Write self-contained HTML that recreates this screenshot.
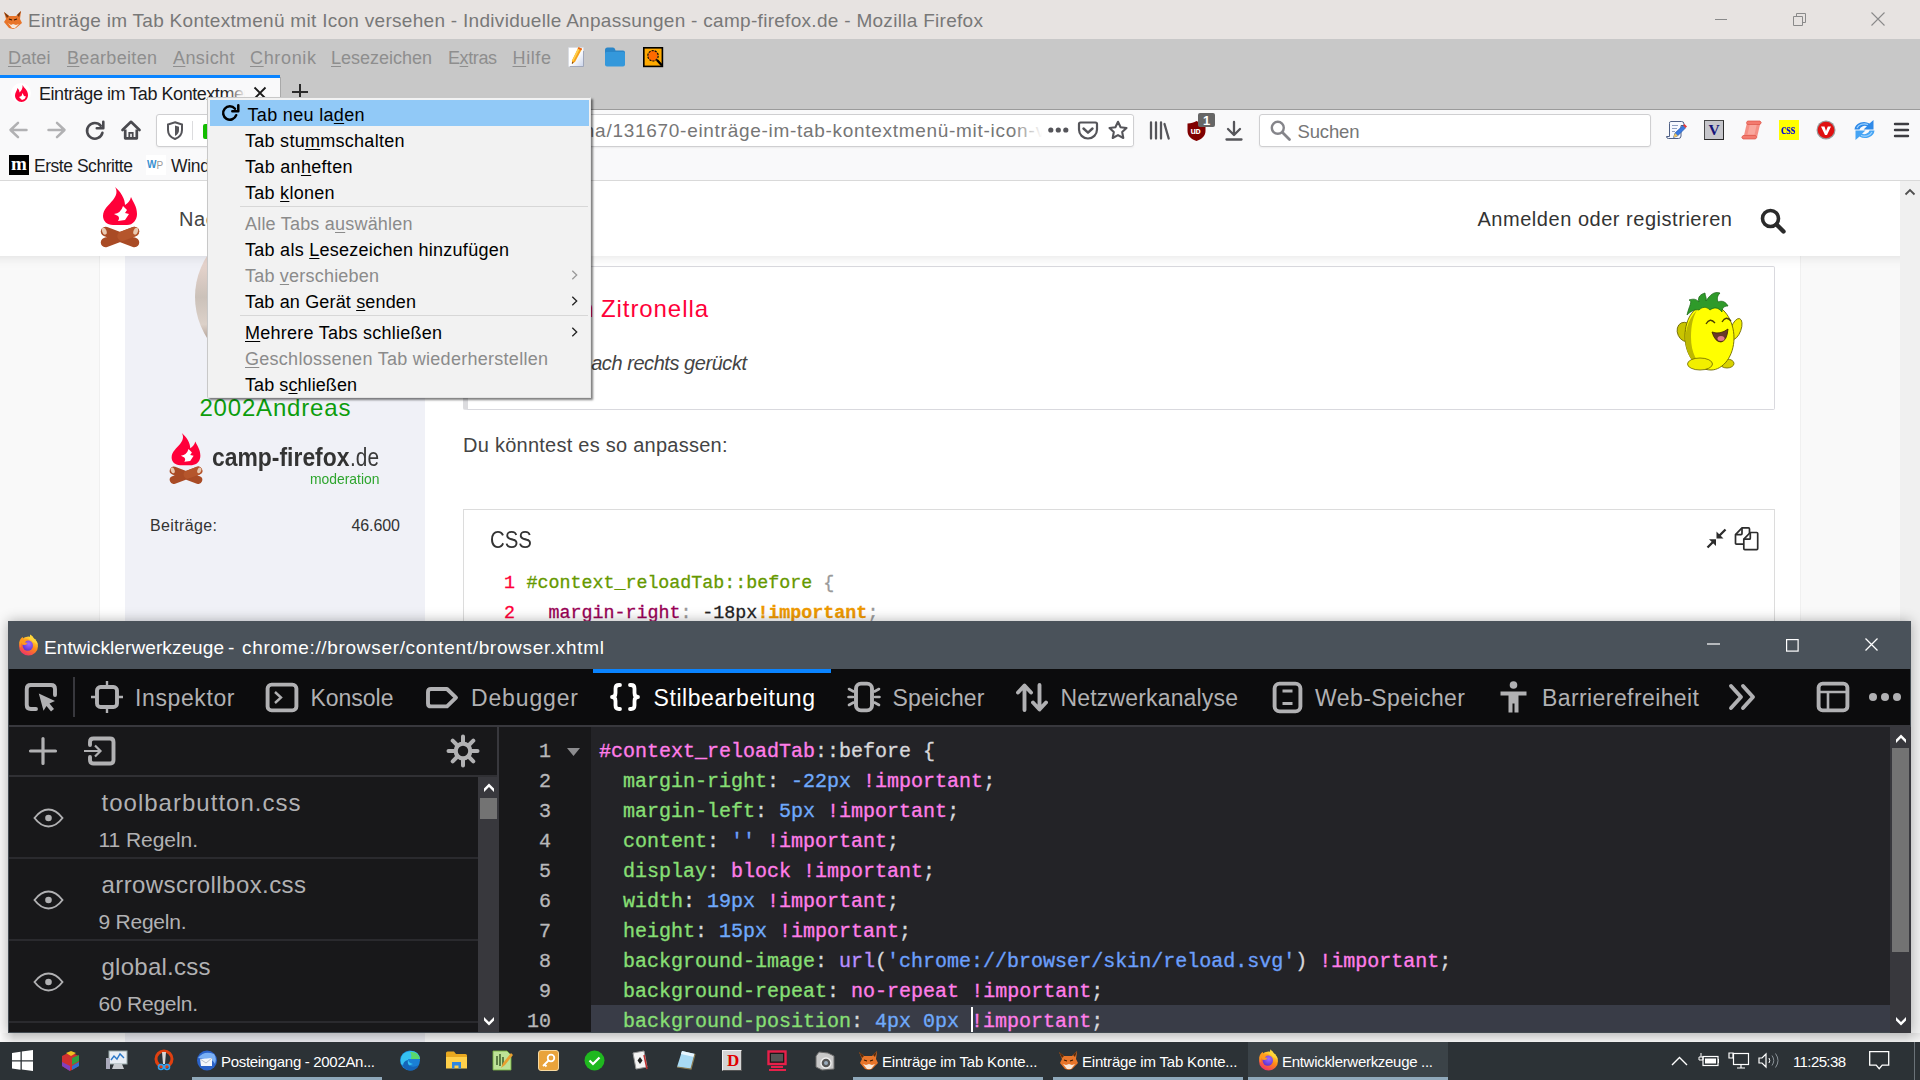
<!DOCTYPE html>
<html lang="de"><head><meta charset="utf-8"><title>Einträge im Tab Kontextmenü mit Icon versehen</title>
<style>
html,body{margin:0;padding:0}
body{width:1920px;height:1080px;overflow:hidden;position:relative;background:#f9f9f9;font-family:"Liberation Sans",sans-serif}
div,svg{position:absolute;box-sizing:border-box}
.t{white-space:nowrap;line-height:0}
.t .s{display:inline-block;height:60px;width:0}
u{text-decoration:underline;text-decoration-thickness:1px;text-underline-offset:2px}
svg{overflow:visible}
</style></head><body>
<div style="left:0px;top:0px;width:1920px;height:39px;background:#e7e3e1;"></div>
<svg style="left:2px;top:9px;" width="21" height="21" viewBox="0 0 21 21"><path d="M2 3l5 4h7l5-5-1 8 2 4-6 5-3 1-4-1-5-6 2-3z" fill="#e8752a"/><path d="M6 14l4 5 3 0 4-4-3 1-3-1-2 1z" fill="#f6e9dc"/><path d="M2 3l3 6 2-2z M19 2l-2 6-2-2z" fill="#7a3a10"/><path d="M7 10l3 1M15 10l-3 1" stroke="#3a1a00" stroke-width="1.2"/></svg>
<div class="t" style="left:28px;top:-33px;font:400 19px 'Liberation Sans',sans-serif;color:#787878;letter-spacing:0.292px;"><i class="s"></i><span>Einträge im Tab Kontextmenü mit Icon versehen - Individuelle Anpassungen - camp-firefox.de - Mozilla Firefox</span></div>
<svg style="left:1714px;top:12px;" width="14" height="14" viewBox="0 0 14 14"><path d="M1 7.5h12" stroke="#8a8a8a" stroke-width="1"/></svg>
<svg style="left:1793px;top:13px;" width="13" height="13" viewBox="0 0 13 13"><path d="M.5 3.5h9v9h-9z M3.5 3.5v-3h9v9h-3" fill="none" stroke="#8a8a8a" stroke-width="1"/></svg>
<svg style="left:1871px;top:12px;" width="14" height="14" viewBox="0 0 14 14"><path d="M.5 .5l13 13M13.5 .5l-13 13" stroke="#8a8a8a" stroke-width="1.1"/></svg>
<div style="left:0px;top:39px;width:1920px;height:71px;background:#c8c8c8;"></div>
<div class="t" style="left:8px;top:4px;font:400 18px 'Liberation Sans',sans-serif;color:#8e8e8e;letter-spacing:0.117px;"><i class="s"></i><span><u>D</u>atei</span></div>
<div class="t" style="left:67px;top:4px;font:400 18px 'Liberation Sans',sans-serif;color:#8e8e8e;letter-spacing:0.325px;"><i class="s"></i><span><u>B</u>earbeiten</span></div>
<div class="t" style="left:173px;top:4px;font:400 18px 'Liberation Sans',sans-serif;color:#8e8e8e;letter-spacing:0.409px;"><i class="s"></i><span><u>A</u>nsicht</span></div>
<div class="t" style="left:250px;top:4px;font:400 18px 'Liberation Sans',sans-serif;color:#8e8e8e;letter-spacing:0.661px;"><i class="s"></i><span><u>C</u>hronik</span></div>
<div class="t" style="left:331px;top:4px;font:400 18px 'Liberation Sans',sans-serif;color:#8e8e8e;letter-spacing:-0.009px;"><i class="s"></i><span><u>L</u>esezeichen</span></div>
<div class="t" style="left:448px;top:4px;font:400 18px 'Liberation Sans',sans-serif;color:#8e8e8e;letter-spacing:-0.406px;"><i class="s"></i><span>E<u>x</u>tras</span></div>
<div class="t" style="left:512.5px;top:4px;font:400 18px 'Liberation Sans',sans-serif;color:#8e8e8e;letter-spacing:0.621px;"><i class="s"></i><span><u>H</u>ilfe</span></div>
<svg style="left:568px;top:47px;" width="17" height="20" viewBox="0 0 17 20"><defs><linearGradient id="npg" x1="0" y1="0" x2="1" y2="1"><stop offset=".5" stop-color="#fff"/><stop offset="1" stop-color="#c9d3ea"/></linearGradient></defs><path d="M.500 .500h15v19H.500z" fill="url(#npg)" stroke="#d4d8e2" stroke-width=".600"/><path d="M15.500 4v15.500H2" fill="none" stroke="#9aa2b6" stroke-width=".900"/><path d="M10.500 .300l3.600 1.500-7 13-3.200 2.200.200-3.800z" fill="#f7a21b"/><path d="M10.500 .300l1.800.700-7 13.200-1.200-.500z" fill="#ffd24d"/><path d="M3.900 17l.100-2.200 1.700.900z" fill="#7a4a1a"/><path d="M10.500 .300l3.600 1.500-.800 1.500-3.600-1.500z" fill="#e8601c"/></svg>
<svg style="left:605px;top:47px;" width="20" height="20" viewBox="0 0 20 20"><path d="M0 3q0-2.500 2.500-2.500h5.500q1.500 0 2 1.500l.500 1.500H18q2 0 2 2V9H0z" fill="#2a86c8"/><path d="M0 6.500q0-1.500 1.500-1.500H18.500Q20 5 20 6.500V17.500q0 2-2 2H2q-2 0-2-2z" fill="#3498db"/></svg>
<svg style="left:643px;top:47px;" width="20" height="20" viewBox="0 0 20 20"><rect x=".800" y=".800" width="18.600" height="18.600" fill="#ffaa00" stroke="#000" stroke-width="1.600"/><circle cx="10" cy="8.800" r="5.200" fill="#ff6a00" stroke="#111" stroke-width="1.200" stroke-dasharray="2.200 1"/><path d="M14 13l5 5.500" stroke="#000" stroke-width="2.400"/></svg>
<div style="left:0px;top:109px;width:1920px;height:1px;background:#9b9b9b;"></div>
<div style="left:0px;top:75px;width:280px;height:35px;background:#f9f9fa;"></div>
<div style="left:0px;top:75px;width:280px;height:3px;background:#0a84ff;"></div>
<div style="left:280px;top:77px;width:1px;height:32px;background:#a9a9a9;"></div>
<div style="left:11px;top:83px;width:20px;height:20px;background:#fff;border-radius:50%"></div>
<svg style="left:13.5px;top:85px;" width="15" height="17" viewBox="0 0 15 17"><path d="M8.5 0c1.5 3 5.5 5 5.5 10 0 4-3 7-6.5 7S1 14 1 10.5c0-3 2-4.500 2.500-7.500 1.500 1.500 2 3 2 4.500C7.500 6 9 3 8.500 0z" fill="#ff0039"/><path d="M5 12l2.500-1 1-3 1.500 3 2 .5-1.500 2.500-2.500 1z" fill="#fff"/></svg>
<div class="t" style="left:39px;width:208px;overflow:hidden;top:40px;font:400 18px 'Liberation Sans',sans-serif;color:#1c1c1e;letter-spacing:-.45px"><i class="s"></i><span>Einträge im Tab Kontextmenü mit Icon</span></div>
<div style="left:226px;top:78px;width:54px;height:30px;background:linear-gradient(90deg,rgba(249,249,250,0),#f9f9fa 36%);"></div>
<svg style="left:253px;top:86px;" width="14" height="14" viewBox="0 0 14 14"><path d="M1.500 1.500l11 11M12.500 1.500l-11 11" stroke="#1a1a1a" stroke-width="1.800"/></svg>
<svg style="left:291px;top:83px;" width="18" height="18" viewBox="0 0 18 18"><path d="M9 1v16M1 9h16" stroke="#2a2a2a" stroke-width="2"/></svg>
<div style="left:0px;top:110px;width:1920px;height:70px;background:#f9f9fa;"></div>
<div style="left:0px;top:180px;width:1920px;height:1px;background:#d9d9d9;"></div>
<svg style="left:8px;top:121px;" width="20" height="18" viewBox="0 0 20 18"><path d="M18.500 9H3M10 1.800L2.500 9l7.500 7.200" fill="none" stroke="#b1b1b3" stroke-width="2.500" stroke-linecap="round" stroke-linejoin="round"/></svg>
<svg style="left:47px;top:121px;transform:scaleX(-1)" width="20" height="18" viewBox="0 0 20 18"><path d="M18.500 9H3M10 1.800L2.500 9l7.500 7.200" fill="none" stroke="#b1b1b3" stroke-width="2.500" stroke-linecap="round" stroke-linejoin="round"/></svg>
<svg style="left:85px;top:120px;" width="20" height="20" viewBox="0 0 20 20"><path d="M15.800 5.800A7.800 7.800 0 1 0 17.400 12.800" fill="none" stroke="#4a4a4f" stroke-width="2.600" stroke-linecap="round"/><path d="M18.300 1.800v6.500h-6.500" fill="none" stroke="#4a4a4f" stroke-width="2.600" stroke-linecap="round" stroke-linejoin="round"/></svg>
<svg style="left:121px;top:120px;" width="20" height="20" viewBox="0 0 20 20"><path d="M1.500 10L10 1.800l8.500 8.200" fill="none" stroke="#4a4a4f" stroke-width="2.700" stroke-linecap="round" stroke-linejoin="round"/><path d="M4.200 9.500v8.800h11.600V9.500" fill="none" stroke="#4a4a4f" stroke-width="2.700" stroke-linejoin="round"/><path d="M8.300 18v-5.200h3.400V18" fill="none" stroke="#4a4a4f" stroke-width="1.800"/></svg>
<div style="left:156px;top:114px;width:978px;height:33px;background:#fff;border:1px solid #cfcfd1;border-radius:3px;box-shadow:0 1px 2px rgba(0,0,0,.06)"></div>
<svg style="left:166px;top:121px;" width="18" height="19" viewBox="0 0 18 19"><path d="M9 1.200l7 2.300v5.500c0 4.500-3 7.500-7 9-4-1.500-7-4.500-7-9V3.500z" fill="none" stroke="#55555a" stroke-width="2"/><path d="M9 4.500v10.500c2.500-1.200 4-3.200 4-6V5.800z" fill="#55555a"/></svg>
<div style="left:192px;top:121px;width:1px;height:19px;background:#dcdcde;"></div>
<div style="left:203px;top:124px;width:8px;height:15px;background:#12bc00;border-radius:2px"></div>
<div class="t" style="right:1307.5px;top:77px;font:400 19px 'Liberation Sans',sans-serif;color:#767676;letter-spacing:.8px"><i class="s"></i><span>camp-firefox.de/forum/thema/</span></div>
<div class="t" style="left:612.5px;top:77px;font:400 19px 'Liberation Sans',sans-serif;color:#767676;letter-spacing:0.703px;"><i class="s"></i><span>131670-einträge-im-tab-kontextmenü-mit-icon</span></div>
<div class="t" style="left:1028.5px;top:77px;font:400 19px 'Liberation Sans',sans-serif;color:#767676;letter-spacing:.8px"><i class="s"></i><span>-versehen/</span></div>
<div style="left:1012px;top:116px;width:33px;height:29px;background:linear-gradient(90deg,rgba(255,255,255,0),#fff 92%);"></div>
<div style="left:1045px;top:116px;width:88px;height:29px;background:#fff;"></div>
<svg style="left:1048px;top:127px;" width="21" height="6" viewBox="0 0 21 6"><circle cx="2.800" cy="3" r="2.600" fill="#55555a"/><circle cx="10.300" cy="3" r="2.600" fill="#55555a"/><circle cx="17.800" cy="3" r="2.600" fill="#55555a"/></svg>
<svg style="left:1078px;top:121px;" width="20" height="19" viewBox="0 0 20 19"><path d="M2.500 1.500h15q1.500 0 1.500 1.500v5.500a9 9 0 0 1-18 0V3q0-1.500 1.500-1.500z" fill="none" stroke="#55555a" stroke-width="2.200"/><path d="M5.500 7.500l4.500 4.200 4.500-4.200" fill="none" stroke="#55555a" stroke-width="2.400" stroke-linecap="round" stroke-linejoin="round"/></svg>
<svg style="left:1108px;top:120px;" width="20" height="20" viewBox="0 0 20 20"><path d="M10 1.800l2.600 5.400 5.900.8-4.300 4.100 1.100 5.900L10 15.100 4.700 18l1.100-5.900L1.500 8l5.900-.8z" fill="none" stroke="#55555a" stroke-width="2.100" stroke-linejoin="round"/></svg>
<svg style="left:1149px;top:121px;" width="21" height="19" viewBox="0 0 21 19"><path d="M2 1.500v16M7 1.500v16M12 1.500v16M15.500 3l4.200 14.500" fill="none" stroke="#55555a" stroke-width="2.300" stroke-linecap="round"/></svg>
<svg style="left:1187px;top:121px;" width="19" height="20" viewBox="0 0 19 20"><path d="M9.500 0c2.500 1.600 5.500 2.400 9 2.600v7.400c0 5-4 8.300-9 10-5-1.700-9-5-9-10V2.600C4 2.400 7 1.600 9.500 0z" fill="#800000"/></svg>
<div class="t" style="left:1190.5px;top:74px;font:700 9px 'Liberation Sans',sans-serif;color:#fff;letter-spacing:-.5px"><i class="s"></i><span>uᴅ</span></div>
<div style="left:1198px;top:113px;width:17px;height:14px;background:#666;border-radius:2px"></div>
<div class="t" style="left:1203px;top:65px;font:700 13px 'Liberation Sans',sans-serif;color:#fff;"><i class="s"></i><span>1</span></div>
<svg style="left:1225px;top:121px;" width="18" height="20" viewBox="0 0 18 20"><path d="M9 1v12M3 8l6 6 6-6M1.500 18.500h15" fill="none" stroke="#55555a" stroke-width="2.300" stroke-linecap="round" stroke-linejoin="round"/></svg>
<div style="left:1259px;top:114px;width:392px;height:33px;background:#fff;border:1px solid #cfcfd1;border-radius:3px;box-shadow:0 1px 2px rgba(0,0,0,.06)"></div>
<svg style="left:1270px;top:120px;" width="21" height="21" viewBox="0 0 21 21"><circle cx="7.800" cy="7.800" r="6" fill="none" stroke="#85858a" stroke-width="2.400"/><path d="M12.500 12.500l7 7" stroke="#85858a" stroke-width="2.800" stroke-linecap="round"/></svg>
<div class="t" style="left:1297.5px;top:78px;font:400 18.5px 'Liberation Sans',sans-serif;color:#767676;letter-spacing:-0.150px;"><i class="s"></i><span>Suchen</span></div>
<svg style="left:1666px;top:120px;" width="21" height="20" viewBox="0 0 21 20"><path d="M4.500 1.500h11q2.500 0 2.500 2.500v1.500h-3V16q0 2.500-2.500 2.500h-10Q.500 18.500.500 16.500h3V3.500q0-2 1-2z" fill="#f6f9ff" stroke="#4e5f85" stroke-width="1"/><path d="M6 5.500h6M6 8.500h5M6 11.500h3" stroke="#8fa0c4" stroke-width="1"/><path d="M7.500 17.500l1.500-4.500 8-7.500 2.500 2.500-8 8z" fill="#3a7ae0" stroke="#2050a0" stroke-width=".600"/><path d="M17 5.500l1.500-1.500 2.500 2.500-1.500 1.500z" fill="#e23a3a"/><path d="M7.500 17.500l1.500-4.500 3 3z" fill="#f2c45a"/></svg>
<div style="left:1704px;top:120px;width:20px;height:20px;background:#c6c6cb;border:1px solid #4a4a4a;border-right-color:#2a2a2a;border-bottom-color:#2a2a2a"></div>
<div class="t" style="left:1708.5px;top:75.19999999999999px;font:700 15.5px 'Liberation Serif',serif;color:#15157a;"><i class="s"></i><span>V</span></div>
<svg style="left:1741px;top:120px;" width="21" height="20" viewBox="0 0 21 20"><path d="M6 2.500h13.500L16 17.500H2.500z" fill="#f58f84"/><path d="M9 3.500h7l-2.500 11h-7z" fill="#f9a79d"/><path d="M6.500 1h12.500q2.500 1.700 0 3.500H6.500q-2-1.700 0-3.500z" fill="#f37a6e" stroke="#dd5548" stroke-width=".700"/><path d="M2 15.500h12.500q2.500 1.700 0 3.500H2q-2.500-1.700 0-3.500z" fill="#f37a6e" stroke="#dd5548" stroke-width=".700"/></svg>
<div style="left:1779px;top:120px;width:20px;height:20px;background:#ffff00;"></div>
<div class="t" style="left:1781px;top:73.69999999999999px;font:700 14px 'Liberation Serif',serif;color:#0a0ad8;transform:scaleX(0.8467);transform-origin:0 0;"><i class="s"></i><span>css</span></div>
<svg style="left:1816px;top:120px;" width="20" height="20" viewBox="0 0 20 20"><circle cx="10" cy="10" r="9.500" fill="#9a9a9a"/><circle cx="10" cy="10" r="8.300" fill="#e01010"/><path d="M5 6.500h3.500L10 11l1.800-4.500H15L11 15H9z" fill="#fff"/></svg>
<svg style="left:1854px;top:120px;" width="21" height="20" viewBox="0 0 21 20"><path d="M.500 9.500A9.500 8 0 0 1 15.500 3.500L19.500 0v9.500H9.500l3.500-3.300A5.500 4.500 0 0 0 5.500 9.500z" fill="#2f8ae8"/><path d="M20.500 10.500A9.500 8 0 0 1 5.500 16.500L1.500 20v-9.500h10L8 13.800a5.500 4.500 0 0 0 7.500-3.300z" fill="#45a4f4"/><path d="M3 8A8 6.500 0 0 1 14 4.500M18 12a8 6.500 0 0 1-11 3.500" fill="none" stroke="#9fd4ff" stroke-width="1.200"/></svg>
<svg style="left:1894px;top:122px;" width="15" height="16" viewBox="0 0 15 16"><path d="M1 2h13M1 8h13M1 14h13" stroke="#3d3d42" stroke-width="2.400" stroke-linecap="round"/></svg>
<div style="left:9px;top:155px;width:20px;height:20px;background:#000;"></div>
<div class="t" style="left:11px;top:109.5px;font:700 19px 'Liberation Serif',serif;color:#fff;"><i class="s"></i><span>m</span></div>
<div class="t" style="left:34px;top:112px;font:400 17.5px 'Liberation Sans',sans-serif;color:#1c1c1e;letter-spacing:-0.465px;"><i class="s"></i><span>Erste Schritte</span></div>
<div style="left:146px;top:155px;width:20px;height:20px;background:#fff;"></div>
<div class="t" style="left:147px;top:108px;font:700 10px 'Liberation Sans',sans-serif;color:#3a8fd0;"><i class="s"></i><span>W</span></div>
<div class="t" style="left:156.5px;top:109px;font:400 10px 'Liberation Sans',sans-serif;color:#9a9a9a;"><i class="s"></i><span>P</span></div>
<div class="t" style="left:171px;top:112px;font:400 17.5px 'Liberation Sans',sans-serif;color:#1c1c1e;letter-spacing:-.3px"><i class="s"></i><span>Windows</span></div>
<div style="left:99px;top:181px;width:1702px;height:861px;background:#fff;border-left:1px solid #f0f0f0;border-right:1px solid #f0f0f0"></div>
<div style="left:125px;top:256px;width:300px;height:786px;background:#f0f1f7;"></div>
<div style="left:195px;top:221px;width:152px;height:152px;background:linear-gradient(180deg,#e6d3cc 28%,#cbc1b9 50%,#dcd1c9 68%,#8a7164 88%);border-radius:50%"></div>
<div class="t" style="left:199.4px;top:355.5px;font:400 24px 'Liberation Sans',sans-serif;color:#0d9d0d;letter-spacing:0.822px;"><i class="s"></i><span>2002Andreas</span></div>
<svg style="left:169px;top:433px;" width="34" height="52" viewBox="0 0 40 61.500"><path d="M15 0C18 5 16 9 13 13 9 18 3 22 3 29c0 5 4 9 10 9h14c6 0 10-5 10-11 0-8-4-12-6-17-1 4-3 6-6 8 0-6-4-13-10-18z" fill="#ff0039"/>
<path d="M23 19l4 4-2 3 4 1-4 6-7 1q2-3 0-5l-4-2q7-1 9-8z" fill="#fff"/>
<path d="M5.500 44.500l29 11M34.500 44.500l-29 11" stroke="#a94b25" stroke-width="9.500" stroke-linecap="round"/><path d="M34.500 44.500L22 49.200" stroke="#b5562c" stroke-width="9.500" stroke-linecap="round"/>
<ellipse cx="4.300" cy="44.200" rx="2.200" ry="3.600" transform="rotate(-20 4.300 44.200)" fill="#e9c9b0"/><ellipse cx="35.700" cy="44.200" rx="2.200" ry="3.600" transform="rotate(20 35.700 44.200)" fill="#e9c9b0"/></svg>
<div class="t" style="left:211.5px;top:405.5px;font:700 26px 'Liberation Sans',sans-serif;color:#333;transform:scaleX(0.8811);transform-origin:0 0;"><i class="s"></i><span>camp-firefox</span></div>
<div class="t" style="left:350px;top:405.5px;font:400 26px 'Liberation Sans',sans-serif;color:#3a3a3a;transform:scaleX(0.8021);transform-origin:0 0;"><i class="s"></i><span>.de</span></div>
<div class="t" style="left:309.5px;top:423.5px;font:400 14.5px 'Liberation Sans',sans-serif;color:#2ea52e;transform:scaleX(0.9580);transform-origin:0 0;"><i class="s"></i><span>moderation</span></div>
<div class="t" style="left:150px;top:471px;font:400 16px 'Liberation Sans',sans-serif;color:#333;letter-spacing:0.369px;"><i class="s"></i><span>Beiträge:</span></div>
<div class="t" style="left:351.5px;top:471px;font:400 16px 'Liberation Sans',sans-serif;color:#333;letter-spacing:-0.087px;"><i class="s"></i><span>46.600</span></div>
<div style="left:463px;top:266px;width:1312px;height:144px;background:#fff;border:1px solid #d9d9de;border-left:5px solid #dcdcdf;border-radius:2px"></div>
<div class="t" style="right:1325.5px;top:257px;font:400 24px 'Liberation Sans',sans-serif;color:#ff0039;letter-spacing:1px"><i class="s"></i><span>Zitat von</span></div>
<div class="t" style="left:601px;top:257px;font:400 24px 'Liberation Sans',sans-serif;color:#ff0039;letter-spacing:0.920px;"><i class="s"></i><span>Zitronella</span></div>
<div class="t" style="right:1345px;top:310px;font:italic 400 20px 'Liberation Sans',sans-serif;color:#444;"><i class="s"></i><span>Icon etwas</span></div>
<div class="t" style="left:580.5px;top:310px;font:italic 400 20px 'Liberation Sans',sans-serif;color:#444;letter-spacing:-0.446px;"><i class="s"></i><span>nach rechts gerückt</span></div>
<svg style="left:1677px;top:292px;" width="66" height="80" viewBox="0 0 66 80"><ellipse cx="8.500" cy="40" rx="8" ry="10" transform="rotate(-25 8.500 40)" fill="#c9c400" stroke="#6b6400" stroke-width=".800"/><ellipse cx="59" cy="37" rx="5" ry="11" transform="rotate(20 59 37)" fill="#f4f000" stroke="#6b6400" stroke-width=".800"/>
<ellipse cx="50" cy="71.500" rx="7" ry="4.500" fill="#d8d200" stroke="#6b6400" stroke-width=".800"/>
<path d="M32 12C46 12 57 28 57 46 57 64 46 78 34 78 20 78 8 64 8 44 8 26 18 12 32 12z" fill="#ffff00" stroke="#6b6400" stroke-width=".900"/>
<path d="M20 18C10 28 6 44 10 58c3 10 10 17 18 19-8-6-14-16-14-32 0-12 2-20 6-27z" fill="#bdb800"/>
<ellipse cx="23" cy="72" rx="12.500" ry="6" fill="#f2ee00" stroke="#6b6400" stroke-width=".800"/>
<path d="M10 23C12 14 16 9 12 8c6-2 8 0 10 2-2-5 2-8 6-9 0 3 2 5 1 8 4-6 8-10 14-8-3 3-3 6-2 9 4-2 8 0 10 4-4 0-6 2-6 6-4-5-8-5-12-2-4-4-8-3-11 0-4-1-8 1-12 5z" fill="#2f9a2a" stroke="#176312" stroke-width=".700"/>
<path d="M29 32q4-7 9-1M45 30q4-7 9-1" fill="none" stroke="#4a4000" stroke-width="1.300"/><path d="M35 40q8 3 16-3-1 12-7 13-6 0-9-10z" fill="#6a3a2a" stroke="#3a2000" stroke-width=".800"/><ellipse cx="44" cy="46.500" rx="3.500" ry="2.500" fill="#e07a8a"/></svg>
<div class="t" style="left:463px;top:392px;font:400 20px 'Liberation Sans',sans-serif;color:#444;letter-spacing:0.252px;"><i class="s"></i><span>Du könntest es so anpassen:</span></div>
<div style="left:463px;top:509px;width:1312px;height:540px;background:#fff;border:1px solid #dcdcdc"></div>
<div class="t" style="left:489.5px;top:488px;font:400 24px 'Liberation Sans',sans-serif;color:#333;transform:scaleX(0.8509);transform-origin:0 0;"><i class="s"></i><span>CSS</span></div>
<svg style="left:1706px;top:528px;" width="21" height="21" viewBox="0 0 21 21"><path d="M19.500 1.500L13 8M1.500 19.500L8 13" stroke="#2d2d2d" stroke-width="2.300"/><path d="M10.500 3.500v7h7z M3 11.300h7V18z" fill="#2d2d2d"/></svg>
<svg style="left:1735px;top:527px;" width="24" height="24" viewBox="0 0 24 24"><path d="M7 .900h6.500q1 0 1 1V17.200H1.500q-1 0-1-1V7.600z" fill="#fff" stroke="#2d2d2d" stroke-width="1.700" stroke-linejoin="round"/><path d="M7 .900V6.600q0 1-1 1H.500" fill="none" stroke="#2d2d2d" stroke-width="1.700"/><path d="M15.300 5.500h6.400q1 0 1 1V21.600q0 1-1 1H9.800q-1 0-1-1V12.200z" fill="#fff" stroke="#2d2d2d" stroke-width="1.700" stroke-linejoin="round"/><path d="M15.300 5.500V11.200q0 1-1 1H8.800" fill="none" stroke="#2d2d2d" stroke-width="1.700"/></svg>
<div class="t" style="left:504px;top:528px;font:400 18.333px 'Liberation Mono',monospace;color:#ff0039;-webkit-text-stroke:.3px"><i class="s"></i><span>1</span></div>
<div class="t" style="left:526.4px;top:528px;font:400 18.333px 'Liberation Mono',monospace;color:#222;-webkit-text-stroke:.3px"><i class="s"></i><span><span style="color:#690">#context_reloadTab::before</span> <span style="color:#999">{</span></span></div>
<div class="t" style="left:504px;top:558px;font:400 18.333px 'Liberation Mono',monospace;color:#ff0039;-webkit-text-stroke:.3px"><i class="s"></i><span>2</span></div>
<div class="t" style="left:548.4px;top:558px;font:400 18.333px 'Liberation Mono',monospace;color:#222;-webkit-text-stroke:.3px"><i class="s"></i><span><span style="color:#905">margin-right</span><span style="color:#999">:</span> -18px<b style="color:#e90">!important</b><span style="color:#999">;</span></span></div>
<div style="left:0px;top:181px;width:1900px;height:110px;overflow:hidden"><div style="left:-20px;top:0;width:1940px;height:75px;background:#fff;box-shadow:0 0 12px rgba(0,0,0,.13)"></div></div>
<svg style="left:100px;top:187px;" width="40" height="61.5" viewBox="0 0 40 61.500"><path d="M15 0C18 5 16 9 13 13 9 18 3 22 3 29c0 5 4 9 10 9h14c6 0 10-5 10-11 0-8-4-12-6-17-1 4-3 6-6 8 0-6-4-13-10-18z" fill="#ff0039"/>
<path d="M23 19l4 4-2 3 4 1-4 6-7 1q2-3 0-5l-4-2q7-1 9-8z" fill="#fff"/>
<path d="M5.500 44.500l29 11M34.500 44.500l-29 11" stroke="#a94b25" stroke-width="9.500" stroke-linecap="round"/><path d="M34.500 44.500L22 49.200" stroke="#b5562c" stroke-width="9.500" stroke-linecap="round"/>
<ellipse cx="4.300" cy="44.200" rx="2.200" ry="3.600" transform="rotate(-20 4.300 44.200)" fill="#e9c9b0"/><ellipse cx="35.700" cy="44.200" rx="2.200" ry="3.600" transform="rotate(20 35.700 44.200)" fill="#e9c9b0"/></svg>
<div class="t" style="left:179px;top:166px;font:400 20px 'Liberation Sans',sans-serif;color:#444;letter-spacing:0.628px;"><i class="s"></i><span>Nachrichten</span></div>
<div class="t" style="left:1477.5px;top:166px;font:400 20px 'Liberation Sans',sans-serif;color:#333;letter-spacing:0.530px;"><i class="s"></i><span>Anmelden oder registrieren</span></div>
<svg style="left:1760px;top:208px;" width="26" height="26" viewBox="0 0 26 26"><circle cx="10.500" cy="10.500" r="8" fill="none" stroke="#2b2b2b" stroke-width="3.600"/><path d="M16.500 16.500l7 7" stroke="#2b2b2b" stroke-width="4.400" stroke-linecap="round"/></svg>
<div style="left:1900px;top:181px;width:20px;height:861px;background:#f0f0f0;"></div>
<svg style="left:1904px;top:187px;" width="12" height="10" viewBox="0 0 12 10"><path d="M1.500 7.500L6 3l4.500 4.500" fill="none" stroke="#505050" stroke-width="1.800"/></svg>
<div style="left:207px;top:97px;width:384px;height:301px;background:#f2f2f2;border:1px solid #c8c8c8;border-right-color:#e4e4e4;border-bottom-color:#e4e4e4;box-shadow:2px 2px 2px rgba(0,0,0,.5)"></div>
<div style="left:210px;top:100px;width:379px;height:26px;background:#91c9f7;"></div>
<svg style="left:221px;top:104px;" width="19" height="17" viewBox="0 0 19 17"><path d="M14 4.700A6.700 6.700 0 1 0 15.200 11.200" fill="none" stroke="#000" stroke-width="2.500" stroke-linecap="round"/><path d="M17.300 1.300v6h-6" fill="none" stroke="#000" stroke-width="2.500" stroke-linecap="round" stroke-linejoin="round"/></svg>
<div class="t" style="left:247.5px;top:60.5px;font:400 18px 'Liberation Sans',sans-serif;color:#000;letter-spacing:0.323px;"><i class="s"></i><span>Tab neu la<u>d</u>en</span></div>
<div class="t" style="left:245px;top:86.5px;font:400 18px 'Liberation Sans',sans-serif;color:#000;letter-spacing:0.275px;"><i class="s"></i><span>Tab stu<u>m</u>mschalten</span></div>
<div class="t" style="left:245px;top:112.5px;font:400 18px 'Liberation Sans',sans-serif;color:#000;letter-spacing:0.308px;"><i class="s"></i><span>Tab an<u>h</u>eften</span></div>
<div class="t" style="left:245px;top:138.5px;font:400 18px 'Liberation Sans',sans-serif;color:#000;letter-spacing:0.269px;"><i class="s"></i><span>Tab <u>k</u>lonen</span></div>
<div class="t" style="left:245px;top:169.5px;font:400 18px 'Liberation Sans',sans-serif;color:#8b8b8b;letter-spacing:0.206px;"><i class="s"></i><span>Alle Tabs a<u>u</u>swählen</span></div>
<div class="t" style="left:245px;top:195.5px;font:400 18px 'Liberation Sans',sans-serif;color:#000;letter-spacing:0.269px;"><i class="s"></i><span>Tab als <u>L</u>esezeichen hinzufügen</span></div>
<div class="t" style="left:245px;top:221.5px;font:400 18px 'Liberation Sans',sans-serif;color:#8b8b8b;letter-spacing:0.208px;"><i class="s"></i><span>Tab <u>v</u>erschieben</span></div>
<div class="t" style="left:245px;top:247.5px;font:400 18px 'Liberation Sans',sans-serif;color:#000;letter-spacing:0.159px;"><i class="s"></i><span>Tab an Gerät <u>s</u>enden</span></div>
<div class="t" style="left:245px;top:278.5px;font:400 18px 'Liberation Sans',sans-serif;color:#000;letter-spacing:0.249px;"><i class="s"></i><span><u>M</u>ehrere Tabs schließen</span></div>
<div class="t" style="left:245px;top:304.5px;font:400 18px 'Liberation Sans',sans-serif;color:#8b8b8b;letter-spacing:0.277px;"><i class="s"></i><span><u>G</u>eschlossenen Tab wiederherstellen</span></div>
<div class="t" style="left:245px;top:330.5px;font:400 18px 'Liberation Sans',sans-serif;color:#000;letter-spacing:0.077px;"><i class="s"></i><span>Tab s<u>c</u>hließen</span></div>
<div style="left:240px;top:206px;width:348px;height:1px;background:#d7d7d7;"></div>
<div style="left:240px;top:315px;width:348px;height:1px;background:#d7d7d7;"></div>
<svg style="left:571px;top:269px;" width="7" height="12" viewBox="0 0 7 12"><path d="M1.300 1.800L5.700 6 1.300 10.200" fill="none" stroke="#9a9a9a" stroke-width="1.300"/></svg>
<svg style="left:571px;top:295px;" width="7" height="12" viewBox="0 0 7 12"><path d="M1.300 1.800L5.700 6 1.300 10.200" fill="none" stroke="#222" stroke-width="1.300"/></svg>
<svg style="left:571px;top:326px;" width="7" height="12" viewBox="0 0 7 12"><path d="M1.300 1.800L5.700 6 1.300 10.200" fill="none" stroke="#222" stroke-width="1.300"/></svg>
<div style="left:8px;top:621px;width:1903px;height:412px;background:#232327;box-shadow:0 0 12px rgba(0,0,0,.3)"></div>
<div style="left:8px;top:621px;width:1903px;height:48px;background:#4a525a;"></div>
<svg style="left:18px;top:634px;" width="21" height="22" viewBox="0 0 21 22"><defs><linearGradient id="ffg" x1=".8" y1=".1" x2=".3" y2="1"><stop offset="0" stop-color="#ffe03a"/><stop offset=".45" stop-color="#ff8a16"/><stop offset="1" stop-color="#f0306a"/></linearGradient><radialGradient id="ffp" cx=".6" cy=".35" r=".8"><stop offset="0" stop-color="#a06bff"/><stop offset="1" stop-color="#5028c8"/></radialGradient></defs>
<circle cx="10.500" cy="12" r="9.500" fill="url(#ffg)"/><path d="M12 .500q3.500 1.500 4 5 3 1.500 4 5.500-2.500-3-5-3-1-2.500-4-3 1.500-2 1-4.500z" fill="#ffd53a"/><circle cx="9.800" cy="11.500" r="5.200" fill="url(#ffp)"/><path d="M1.200 8.500Q2 4 5 3q-.500 2 1 3 2.500-1.500 5 0-3 0-4 2.500 1.500.500 2.500 0-.500 2.500-3.500 2.500-2 0-2.500-2.500-1.500 2-.500 5.500Q1 11.500 1.200 8.500z" fill="#ff9a1e"/></svg>
<div class="t" style="left:44px;top:594px;font:400 19px 'Liberation Sans',sans-serif;color:#fff;letter-spacing:0.085px;"><i class="s"></i><span>Entwicklerwerkzeuge</span></div>
<div class="t" style="left:228px;top:594px;font:400 19px 'Liberation Sans',sans-serif;color:#fff;"><i class="s"></i><span>-</span></div>
<div class="t" style="left:242px;top:594px;font:400 19px 'Liberation Sans',sans-serif;color:#fff;letter-spacing:0.679px;"><i class="s"></i><span>chrome://browser/content/browser.xhtml</span></div>
<svg style="left:1707px;top:643px;" width="14" height="2" viewBox="0 0 14 2"><path d="M0 1h13" stroke="#fff" stroke-width="1.200"/></svg>
<svg style="left:1786px;top:639px;" width="13" height="13" viewBox="0 0 13 13"><rect x=".600" y=".600" width="11.500" height="11.500" fill="none" stroke="#fff" stroke-width="1.200"/></svg>
<svg style="left:1865px;top:638px;" width="13" height="13" viewBox="0 0 13 13"><path d="M.500 .500l12 12M12.500 .500l-12 12" stroke="#fff" stroke-width="1.300"/></svg>
<div style="left:8px;top:669px;width:1903px;height:57px;background:#0c0c0d;"></div>
<div style="left:8px;top:725px;width:1903px;height:2px;background:#38383d;"></div>
<div style="left:593px;top:669px;width:238px;height:4px;background:#0a84ff;"></div>
<svg style="left:24px;top:682px;" width="34" height="31" viewBox="0 0 34 31"><path d="M31 13V7q0-4-4-4H6.750q-4 0-4 4V23q0 4 4 4H12" fill="none" stroke="#b1b1b3" stroke-width="3.900" stroke-linecap="round" stroke-linejoin="round"/><path d="M14.800 11.500L31 19l-5.500 2.500L30 27l-3 2.500-4.500-5.500-3 4.700z" fill="#b1b1b3"/></svg>
<div style="left:73px;top:677px;width:2px;height:40px;background:#38383d;"></div>
<svg style="left:91px;top:681px;" width="32" height="32" viewBox="0 0 32 32"><rect x="6" y="6" width="20" height="20" rx="3.500" fill="none" stroke="#b1b1b3" stroke-width="3.900" stroke-linecap="round" stroke-linejoin="round"/><path d="M16 0v5M16 27v5M0 16h5M27 16h5" stroke="#b1b1b3" stroke-width="2.400"/></svg>
<div class="t" style="left:135px;top:646px;font:400 23px 'Liberation Sans',sans-serif;color:#b1b1b3;letter-spacing:0.611px;"><i class="s"></i><span>Inspektor</span></div>
<svg style="left:266px;top:683px;" width="32" height="29" viewBox="0 0 32 29"><rect x="1.600" y="1.600" width="28.800" height="25.800" rx="4" fill="none" stroke="#b1b1b3" stroke-width="3.900" stroke-linecap="round" stroke-linejoin="round"/><path d="M9 9l6 5.500-6 5.500" fill="none" stroke="#b1b1b3" stroke-width="2.400"/></svg>
<div class="t" style="left:310.5px;top:646px;font:400 23px 'Liberation Sans',sans-serif;color:#b1b1b3;letter-spacing:-0.021px;"><i class="s"></i><span>Konsole</span></div>
<svg style="left:426px;top:685px;" width="33" height="25" viewBox="0 0 33 25"><path d="M5 4h16l9 8.700-9 8.700H5q-3 0-3-3V7q0-3 3-3z" fill="none" stroke="#b1b1b3" stroke-width="3.900" stroke-linecap="round" stroke-linejoin="round"/></svg>
<div class="t" style="left:471px;top:646px;font:400 23px 'Liberation Sans',sans-serif;color:#b1b1b3;letter-spacing:0.853px;"><i class="s"></i><span>Debugger</span></div>
<svg style="left:610px;top:683px;" width="30" height="28" viewBox="0 0 30 28"><path d="M10 2H9Q5.500 2 5.500 5.500V10Q5.500 14 2 14 5.500 14 5.500 18v4.500Q5.500 26 9 26h1M20 2h1q3.500 0 3.500 3.500V10q0 4 3.500 4-3.500 0-3.500 4v4.500Q24.500 26 21 26h-1" fill="none" stroke="#fff" stroke-width="3.800" stroke-linecap="round" stroke-linejoin="round"/></svg>
<div class="t" style="left:653.5px;top:646px;font:400 23px 'Liberation Sans',sans-serif;color:#fff;letter-spacing:0.575px;"><i class="s"></i><span>Stilbearbeitung</span></div>
<svg style="left:848px;top:682px;" width="32" height="30" viewBox="0 0 32 30"><rect x="8" y="1.600" width="16" height="26.800" rx="5" fill="none" stroke="#b1b1b3" stroke-width="3.900" stroke-linecap="round" stroke-linejoin="round"/><path d="M1 7l4.500 2.500M.500 15H5M1 23l4.500-2.500M31 7l-4.500 2.500M31.500 15H27M31 23l-4.500-2.500" stroke="#b1b1b3" stroke-width="2.600" stroke-linecap="round"/></svg>
<div class="t" style="left:892.5px;top:646px;font:400 23px 'Liberation Sans',sans-serif;color:#b1b1b3;letter-spacing:0.174px;"><i class="s"></i><span>Speicher</span></div>
<svg style="left:1016px;top:683px;" width="32" height="29" viewBox="0 0 32 29"><path d="M8.500 27V3M2 9.500L8.500 2.500 15 9.500M23.500 2v24M17 19.500l6.500 7 6.500-7" fill="none" stroke="#b1b1b3" stroke-width="3.900" stroke-linecap="round" stroke-linejoin="round"/></svg>
<div class="t" style="left:1060.5px;top:646px;font:400 23px 'Liberation Sans',sans-serif;color:#b1b1b3;letter-spacing:0.169px;"><i class="s"></i><span>Netzwerkanalyse</span></div>
<svg style="left:1273px;top:682px;" width="29" height="31" viewBox="0 0 29 31"><rect x="1.600" y="1.600" width="25.800" height="27.800" rx="5" fill="none" stroke="#b1b1b3" stroke-width="3.900" stroke-linecap="round" stroke-linejoin="round"/><path d="M9.500 9h10M9.500 21.500h10" stroke="#b1b1b3" stroke-width="3"/></svg>
<div class="t" style="left:1315px;top:646px;font:400 23px 'Liberation Sans',sans-serif;color:#b1b1b3;letter-spacing:0.426px;"><i class="s"></i><span>Web-Speicher</span></div>
<svg style="left:1499px;top:681px;" width="29" height="32" viewBox="0 0 29 32"><circle cx="14.500" cy="4" r="3.800" fill="#b1b1b3"/><path d="M1.500 10.500h26v4h-8v17h-4v-9h-2v9h-4v-17h-8z" fill="#b1b1b3"/></svg>
<div class="t" style="left:1542px;top:646px;font:400 23px 'Liberation Sans',sans-serif;color:#b1b1b3;letter-spacing:0.410px;"><i class="s"></i><span>Barrierefreiheit</span></div>
<svg style="left:1729px;top:684px;" width="27" height="26" viewBox="0 0 27 26"><path d="M2 2l10 11L2 24M14 2l10 11-10 11" fill="none" stroke="#b1b1b3" stroke-width="3.900" stroke-linecap="round" stroke-linejoin="round"/></svg>
<svg style="left:1817px;top:682px;" width="32" height="30" viewBox="0 0 32 30"><rect x="1.600" y="1.600" width="28.800" height="26.800" rx="4" fill="none" stroke="#b1b1b3" stroke-width="3.900" stroke-linecap="round" stroke-linejoin="round"/><path d="M1.600 10h28.800M11 10v18" stroke="#b1b1b3" stroke-width="2.600"/></svg>
<svg style="left:1868px;top:692px;" width="34" height="10" viewBox="0 0 34 10"><circle cx="5" cy="5" r="4" fill="#b1b1b3"/><circle cx="17" cy="5" r="4" fill="#b1b1b3"/><circle cx="29" cy="5" r="4" fill="#b1b1b3"/></svg>
<div style="left:8px;top:727px;width:490px;height:306px;background:#18181a;"></div>
<div style="left:8px;top:775px;width:489px;height:2px;background:#303034;"></div>
<svg style="left:29px;top:737px;" width="28" height="28" viewBox="0 0 28 28"><path d="M14 1.500v25M1.500 14h25" stroke="#b1b1b3" stroke-width="3.200" stroke-linecap="round"/></svg>
<svg style="left:83px;top:737px;" width="33" height="28" viewBox="0 0 33 28"><path d="M7 8V5q0-3.500 3.500-3.500H27q3.500 0 3.500 3.500v18q0 3.500-3.500 3.500H10.500Q7 26.500 7 23v-3" fill="none" stroke="#b1b1b3" stroke-width="3.900" stroke-linecap="round" stroke-linejoin="round"/><path d="M1 14h16M12 8.500l5.500 5.500-5.500 5.500" fill="none" stroke="#b1b1b3" stroke-width="2.200"/></svg>
<svg style="left:447px;top:735px;" width="32" height="32" viewBox="0 0 32 32"><circle cx="16" cy="16" r="7.300" fill="none" stroke="#b1b1b3" stroke-width="4.200"/><path d="M16 1.500v6M16 24.500v6M1.500 16h6M24.500 16h6M5.700 5.700l4.300 4.300M22 22l4.300 4.300M26.300 5.700L22 10M10 22l-4.300 4.300" stroke="#b1b1b3" stroke-width="4" stroke-linecap="round"/></svg>
<div style="left:8px;top:857px;width:470px;height:2px;background:#2a2a2e;"></div>
<svg style="left:33px;top:808px;" width="31" height="20" viewBox="0 0 31 20"><path d="M1.500 10Q8 1.500 15.500 1.500T29.500 10Q23 18.500 15.500 18.500T1.500 10z" fill="none" stroke="#b1b1b3" stroke-width="1.900"/><circle cx="15.500" cy="10" r="3.300" fill="#b1b1b3"/></svg>
<div class="t" style="left:101.5px;top:751px;font:400 24px 'Liberation Sans',sans-serif;color:#b1b1b3;letter-spacing:1.014px;"><i class="s"></i><span>toolbarbutton.css</span></div>
<div class="t" style="left:98.5px;top:787px;font:400 21px 'Liberation Sans',sans-serif;color:#b1b1b3;letter-spacing:-0.059px;"><i class="s"></i><span>11 Regeln.</span></div>
<div style="left:8px;top:939px;width:470px;height:2px;background:#2a2a2e;"></div>
<svg style="left:33px;top:890px;" width="31" height="20" viewBox="0 0 31 20"><path d="M1.500 10Q8 1.500 15.500 1.500T29.500 10Q23 18.500 15.500 18.500T1.500 10z" fill="none" stroke="#b1b1b3" stroke-width="1.900"/><circle cx="15.500" cy="10" r="3.300" fill="#b1b1b3"/></svg>
<div class="t" style="left:101.5px;top:833px;font:400 24px 'Liberation Sans',sans-serif;color:#b1b1b3;letter-spacing:0.418px;"><i class="s"></i><span>arrowscrollbox.css</span></div>
<div class="t" style="left:98.5px;top:869px;font:400 21px 'Liberation Sans',sans-serif;color:#b1b1b3;letter-spacing:-0.238px;"><i class="s"></i><span>9 Regeln.</span></div>
<div style="left:8px;top:1021px;width:470px;height:2px;background:#2a2a2e;"></div>
<svg style="left:33px;top:972px;" width="31" height="20" viewBox="0 0 31 20"><path d="M1.500 10Q8 1.500 15.500 1.500T29.500 10Q23 18.500 15.500 18.500T1.500 10z" fill="none" stroke="#b1b1b3" stroke-width="1.900"/><circle cx="15.500" cy="10" r="3.300" fill="#b1b1b3"/></svg>
<div class="t" style="left:101.5px;top:915px;font:400 24px 'Liberation Sans',sans-serif;color:#b1b1b3;letter-spacing:0.252px;"><i class="s"></i><span>global.css</span></div>
<div class="t" style="left:98.5px;top:951px;font:400 21px 'Liberation Sans',sans-serif;color:#b1b1b3;letter-spacing:-0.231px;"><i class="s"></i><span>60 Regeln.</span></div>
<div style="left:478px;top:777px;width:19px;height:256px;background:#38383d;"></div>
<svg style="left:483.5px;top:783px;" width="10" height="9" viewBox="0 0 10 9"><path d="M0 5.500L5 .500l5 5V9L5 4 0 9z" fill="#fff"/></svg>
<div style="left:480px;top:798px;width:17px;height:21px;background:#737373;"></div>
<svg style="left:483.5px;top:1017px;" width="10" height="9" viewBox="0 0 10 9"><path d="M0 3.500L5 8.500l5-5V0L5 5 0 0z" fill="#fff"/></svg>
<div style="left:497px;top:727px;width:2px;height:306px;background:#38383d;"></div>
<div style="left:499px;top:727px;width:92px;height:306px;background:#18181a;"></div>
<div style="left:591px;top:1005px;width:1299px;height:28px;background:#393c47;"></div>
<div class="t" style="right:1369px;top:697px;font:400 20px 'Liberation Mono',monospace;color:#b8b8ba;-webkit-text-stroke:.3px"><i class="s"></i><span>1</span></div>
<div class="t" style="left:599px;top:697px;font:400 20px 'Liberation Mono',monospace;color:#d7d7db;white-space:pre;-webkit-text-stroke:.35px"><i class="s"></i><span><span style="color:#ff7de9">#context_reloadTab</span>::before {</span></div>
<div class="t" style="right:1369px;top:727px;font:400 20px 'Liberation Mono',monospace;color:#b8b8ba;-webkit-text-stroke:.3px"><i class="s"></i><span>2</span></div>
<div class="t" style="left:599px;top:727px;font:400 20px 'Liberation Mono',monospace;color:#d7d7db;white-space:pre;-webkit-text-stroke:.35px"><i class="s"></i><span>  <span style="color:#86de74">margin-right</span>: <span style="color:#6fa9fb">-22px</span> <span style="color:#ff7de9">!important</span>;</span></div>
<div class="t" style="right:1369px;top:757px;font:400 20px 'Liberation Mono',monospace;color:#b8b8ba;-webkit-text-stroke:.3px"><i class="s"></i><span>3</span></div>
<div class="t" style="left:599px;top:757px;font:400 20px 'Liberation Mono',monospace;color:#d7d7db;white-space:pre;-webkit-text-stroke:.35px"><i class="s"></i><span>  <span style="color:#86de74">margin-left</span>: <span style="color:#6fa9fb">5px</span> <span style="color:#ff7de9">!important</span>;</span></div>
<div class="t" style="right:1369px;top:787px;font:400 20px 'Liberation Mono',monospace;color:#b8b8ba;-webkit-text-stroke:.3px"><i class="s"></i><span>4</span></div>
<div class="t" style="left:599px;top:787px;font:400 20px 'Liberation Mono',monospace;color:#d7d7db;white-space:pre;-webkit-text-stroke:.35px"><i class="s"></i><span>  <span style="color:#86de74">content</span>: <span style="color:#6b9ffb">''</span> <span style="color:#ff7de9">!important</span>;</span></div>
<div class="t" style="right:1369px;top:817px;font:400 20px 'Liberation Mono',monospace;color:#b8b8ba;-webkit-text-stroke:.3px"><i class="s"></i><span>5</span></div>
<div class="t" style="left:599px;top:817px;font:400 20px 'Liberation Mono',monospace;color:#d7d7db;white-space:pre;-webkit-text-stroke:.35px"><i class="s"></i><span>  <span style="color:#86de74">display</span>: <span style="color:#ff7de9">block</span> <span style="color:#ff7de9">!important</span>;</span></div>
<div class="t" style="right:1369px;top:847px;font:400 20px 'Liberation Mono',monospace;color:#b8b8ba;-webkit-text-stroke:.3px"><i class="s"></i><span>6</span></div>
<div class="t" style="left:599px;top:847px;font:400 20px 'Liberation Mono',monospace;color:#d7d7db;white-space:pre;-webkit-text-stroke:.35px"><i class="s"></i><span>  <span style="color:#86de74">width</span>: <span style="color:#6fa9fb">19px</span> <span style="color:#ff7de9">!important</span>;</span></div>
<div class="t" style="right:1369px;top:877px;font:400 20px 'Liberation Mono',monospace;color:#b8b8ba;-webkit-text-stroke:.3px"><i class="s"></i><span>7</span></div>
<div class="t" style="left:599px;top:877px;font:400 20px 'Liberation Mono',monospace;color:#d7d7db;white-space:pre;-webkit-text-stroke:.35px"><i class="s"></i><span>  <span style="color:#86de74">height</span>: <span style="color:#6fa9fb">15px</span> <span style="color:#ff7de9">!important</span>;</span></div>
<div class="t" style="right:1369px;top:907px;font:400 20px 'Liberation Mono',monospace;color:#b8b8ba;-webkit-text-stroke:.3px"><i class="s"></i><span>8</span></div>
<div class="t" style="left:599px;top:907px;font:400 20px 'Liberation Mono',monospace;color:#d7d7db;white-space:pre;-webkit-text-stroke:.35px"><i class="s"></i><span>  <span style="color:#86de74">background-image</span>: <span style="color:#b98eff">url</span>(<span style="color:#6b9ffb">'chrome://browser/skin/reload.svg'</span>) <span style="color:#ff7de9">!important</span>;</span></div>
<div class="t" style="right:1369px;top:937px;font:400 20px 'Liberation Mono',monospace;color:#b8b8ba;-webkit-text-stroke:.3px"><i class="s"></i><span>9</span></div>
<div class="t" style="left:599px;top:937px;font:400 20px 'Liberation Mono',monospace;color:#d7d7db;white-space:pre;-webkit-text-stroke:.35px"><i class="s"></i><span>  <span style="color:#86de74">background-repeat</span>: <span style="color:#ff7de9">no-repeat</span> <span style="color:#ff7de9">!important</span>;</span></div>
<div class="t" style="right:1369px;top:967px;font:400 20px 'Liberation Mono',monospace;color:#b8b8ba;-webkit-text-stroke:.3px"><i class="s"></i><span>10</span></div>
<div class="t" style="left:599px;top:967px;font:400 20px 'Liberation Mono',monospace;color:#d7d7db;white-space:pre;-webkit-text-stroke:.35px"><i class="s"></i><span>  <span style="color:#86de74">background-position</span>: <span style="color:#6fa9fb">4px 0px</span> <span style="color:#ff7de9">!important</span>;</span></div>
<svg style="left:567px;top:748px;" width="13" height="8" viewBox="0 0 13 8"><path d="M0 0h13L6.500 8z" fill="#8c8c8f"/></svg>
<div style="left:971px;top:1007px;width:2px;height:26px;background:#fff;"></div>
<div style="left:0px;top:1033px;width:1920px;height:9px;background:#f9f9f9;"></div>
<div style="left:100px;top:1033px;width:1700px;height:9px;background:#fff;"></div>
<div style="left:125px;top:1033px;width:300px;height:9px;background:#f0f1f7;"></div>
<div style="left:0px;top:1033px;width:1920px;height:9px;background:linear-gradient(180deg,rgba(0,0,0,.22),rgba(0,0,0,.06));-webkit-mask-image:linear-gradient(90deg,transparent,#000 14px,#000 1906px,rgba(0,0,0,.4))"></div>
<div style="left:8px;top:669px;width:1903px;height:364px;border:1px solid #414950;border-top:0"></div>
<div style="left:1890px;top:727px;width:21px;height:306px;background:#38383d;"></div>
<svg style="left:1895.5px;top:733.5px;" width="10" height="9" viewBox="0 0 10 9"><path d="M0 5.500L5 .500l5 5V9L5 4 0 9z" fill="#fff"/></svg>
<div style="left:1892px;top:748px;width:17px;height:204px;background:#737373;"></div>
<svg style="left:1895.5px;top:1017px;" width="10" height="9" viewBox="0 0 10 9"><path d="M0 3.500L5 8.500l5-5V0L5 5 0 0z" fill="#fff"/></svg>
<div style="left:0px;top:1042px;width:1920px;height:38px;background:#2c3236;"></div>
<svg style="left:12px;top:1050px;" width="21" height="21" viewBox="0 0 21 21"><path d="M0 3l8.500-1.200v8.400H0z M9.800 1.600L21 0v10.200H9.800z M0 11.400h8.500v8.400L0 18.600z M9.800 11.400H21V21l-11.200-1.600z" fill="#fff"/></svg>
<svg style="left:60px;top:1050px;" width="21" height="21" viewBox="0 0 21 21"><path d="M2 6l8-4 9 4v10l-9 5-8-5z" fill="#d03030"/><path d="M6 3l5-2 5 2-5 3z" fill="#f0c020"/><path d="M12 8l7-3v6l-7 4z" fill="#30a040"/><path d="M2 12l8 4v5l-8-5z" fill="#8040c0"/><path d="M12 16l7-4v4l-7 4z" fill="#3070d0"/></svg>
<svg style="left:106px;top:1050px;" width="21" height="21" viewBox="0 0 21 21"><rect x="3" y="1" width="18" height="13" fill="#e8eef4" stroke="#9aa"/><path d="M5 10l3-4 3 3 3-5 4 4" fill="none" stroke="#2a78c8" stroke-width="1.400"/><path d="M8 14h8l2 5H6z" fill="#c8ccd0"/><rect x="0" y="8" width="4" height="11" fill="#aab"/></svg>
<svg style="left:153px;top:1050px;" width="21" height="21" viewBox="0 0 21 21"><circle cx="11" cy="9" r="8" fill="none" stroke="#e04010" stroke-width="3"/><path d="M10 2l1 12M12 2l-1 12" stroke="#d8d8d8" stroke-width="2"/><circle cx="8" cy="17" r="2.500" fill="none" stroke="#30a0f0" stroke-width="1.600"/><circle cx="14" cy="17" r="2.500" fill="none" stroke="#30a0f0" stroke-width="1.600"/></svg>
<svg style="left:196px;top:1050px;" width="21" height="21" viewBox="0 0 21 21"><circle cx="11" cy="10.500" r="10" fill="#2a62c8"/><path d="M2 8q6-8 16-4 3 4 1 10-3-6-10-5z" fill="#7ab0f4"/><path d="M4 9l12-1v8H5z" fill="#f4f6fa"/><path d="M4 9l6 4 6-5" fill="none" stroke="#b8c0cc"/></svg>
<div class="t" style="left:221px;top:1007px;font:400 15px 'Liberation Sans',sans-serif;color:#fff;letter-spacing:-0.316px;"><i class="s"></i><span>Posteingang - 2002An...</span></div>
<div style="left:192px;top:1077px;width:190px;height:3px;background:#8fa8ba;"></div>
<svg style="left:399px;top:1050px;" width="21" height="21" viewBox="0 0 21 21"><circle cx="11" cy="10.500" r="10" fill="#1a7fd4"/><path d="M2 14q-2-12 10-13 8 0 9 8H9q0 4 5 5-7 3-12 0z" fill="#35c1f1"/><path d="M4 16q4 6 11 4 4-2 5-5-5 3-9 1-3-2-2-6-5 1-5 6z" fill="#1565b8"/><path d="M11 2q8-1 10 7h-9q1-5-1-7z" fill="#5ad86a"/></svg>
<svg style="left:446px;top:1050px;" width="21" height="21" viewBox="0 0 21 21"><path d="M0 3q0-1.500 1.500-1.500H8l2 2.500h9.500Q21 4 21 5.500V18H0z" fill="#e8a820"/><path d="M0 7h21v11.500H0z" fill="#ffd04a"/><path d="M6 12h9v6.500h-2.500v-3h-4v3H6z" fill="#2f86e0"/></svg>
<svg style="left:492px;top:1050px;" width="21" height="21" viewBox="0 0 21 21"><path d="M1 1h14l4 4v15H1z" fill="#f4f8ee" stroke="#6a9a40"/><path d="M1 1h14l4 4v15H1z" fill="#8fd050" opacity=".55"/><path d="M5 6v9M8 4v12M11 7v8" stroke="#2a4a1a" stroke-width="1.300"/><path d="M9 18l2-5 8-10 2 2-8 10z" fill="#e8a030"/></svg>
<svg style="left:538px;top:1050px;" width="21" height="21" viewBox="0 0 21 21"><rect x=".500" y=".500" width="20" height="20" rx="2.500" fill="#e9a33b" stroke="#f7d9a0"/><circle cx="13" cy="8" r="3.300" fill="none" stroke="#fff" stroke-width="1.800"/><path d="M10.500 10.500L5 16m1.500-1.500l2 2" stroke="#fff" stroke-width="1.800" fill="none"/></svg>
<svg style="left:584px;top:1050px;" width="21" height="21" viewBox="0 0 21 21"><circle cx="10.500" cy="10.500" r="10" fill="#1fb81f"/><path d="M5.500 10.500l3.500 3.500 6.500-6.500" fill="none" stroke="#fff" stroke-width="2.200"/></svg>
<svg style="left:631px;top:1050px;" width="17" height="21" viewBox="0 0 17 21"><path d="M2 3l11-2 3 16-11 2z" fill="#f4f4f4" stroke="#999"/><path d="M9 7l2.500 3.500L9 14l-2.500-3.500z" fill="#222"/><path d="M13 5l3 14" stroke="#c03030" stroke-width="1.500"/></svg>
<svg style="left:676px;top:1050px;" width="20" height="21" viewBox="0 0 20 21"><path d="M6 1l13 3-4 15L1 17z" fill="#a8daf4"/><path d="M6 1l13 3-1 3L5 4z" fill="#e8f6ff"/><path d="M1 17l14 2 4-15" fill="none" stroke="#8a7a50" stroke-width="1.200"/></svg>
<div style="left:722px;top:1050px;width:20px;height:21px;background:#d4d4d4;border:1px solid #f4f4f4;border-right-color:#555;border-bottom-color:#555"></div>
<div class="t" style="left:727px;top:1006px;font:700 17px 'Liberation Serif',serif;color:#e00000;"><i class="s"></i><span>D</span></div>
<svg style="left:767px;top:1050px;" width="21" height="21" viewBox="0 0 21 21"><rect x="1.500" y="1.500" width="17" height="12.500" fill="#1a1a1a" stroke="#e8204a" stroke-width="2.400"/><path d="M4 17h12M2 20h17" stroke="#e8204a" stroke-width="1.800"/><rect x="4" y="4" width="12" height="7.500" fill="#555"/></svg>
<svg style="left:815px;top:1050px;" width="19" height="21" viewBox="0 0 19 21"><path d="M1 6l3-4 9 1 6 3v13l-12 1-6-3z" fill="#c8c8c8" stroke="#6a6a6a"/><circle cx="11" cy="13" r="5" fill="#555" stroke="#eee" stroke-width="1.400"/><circle cx="11" cy="13" r="2" fill="#9ab"/></svg>
<svg style="left:858px;top:1050px;" width="21" height="21" viewBox="0 0 21 21"><path d="M1 2l5 4h8l5-5-1 8 2 4-6 6-3 1-4-1-5-6 2-4z" fill="#e8752a"/><path d="M5 14l4 5 4 0 4-5-3 1-3-1-3 1z" fill="#f6e9dc"/><path d="M1 2l3 6 2-2z M19 1l-2 6-2-2z" fill="#5a2a08"/><path d="M6 10l3 1M15 10l-3 1" stroke="#3a1a00" stroke-width="1.200"/></svg>
<div class="t" style="left:882px;top:1007px;font:400 15px 'Liberation Sans',sans-serif;color:#fff;letter-spacing:-0.188px;"><i class="s"></i><span>Einträge im Tab Konte...</span></div>
<div style="left:853px;top:1077px;width:190px;height:3px;background:#8fa8ba;"></div>
<svg style="left:1058px;top:1050px;" width="21" height="21" viewBox="0 0 21 21"><path d="M1 2l5 4h8l5-5-1 8 2 4-6 6-3 1-4-1-5-6 2-4z" fill="#e8752a"/><path d="M5 14l4 5 4 0 4-5-3 1-3-1-3 1z" fill="#f6e9dc"/><path d="M1 2l3 6 2-2z M19 1l-2 6-2-2z" fill="#5a2a08"/><path d="M6 10l3 1M15 10l-3 1" stroke="#3a1a00" stroke-width="1.200"/></svg>
<div class="t" style="left:1082px;top:1007px;font:400 15px 'Liberation Sans',sans-serif;color:#fff;letter-spacing:-0.188px;"><i class="s"></i><span>Einträge im Tab Konte...</span></div>
<div style="left:1053px;top:1077px;width:190px;height:3px;background:#8fa8ba;"></div>
<div style="left:1248px;top:1042px;width:200px;height:38px;background:#3b4348;"></div>
<svg style="left:1258px;top:1049px;" width="21" height="22" viewBox="0 0 21 22"><defs><linearGradient id="ffg2" x1=".8" y1=".1" x2=".3" y2="1"><stop offset="0" stop-color="#ffe03a"/><stop offset=".45" stop-color="#ff8a16"/><stop offset="1" stop-color="#f0306a"/></linearGradient><radialGradient id="ffp2" cx=".6" cy=".35" r=".8"><stop offset="0" stop-color="#a06bff"/><stop offset="1" stop-color="#5028c8"/></radialGradient></defs>
<circle cx="10.500" cy="12" r="9.500" fill="url(#ffg2)"/><path d="M12 .500q3.500 1.500 4 5 3 1.500 4 5.500-2.500-3-5-3-1-2.500-4-3 1.500-2 1-4.500z" fill="#ffd53a"/><circle cx="9.800" cy="11.500" r="5.200" fill="url(#ffp2)"/><path d="M1.200 8.500Q2 4 5 3q-.500 2 1 3 2.500-1.500 5 0-3 0-4 2.500 1.500.500 2.500 0-.500 2.500-3.500 2.500-2 0-2.500-2.500-1.500 2-.500 5.500Q1 11.500 1.200 8.500z" fill="#ff9a1e"/></svg>
<div class="t" style="left:1282px;top:1007px;font:400 15px 'Liberation Sans',sans-serif;color:#fff;letter-spacing:-0.298px;"><i class="s"></i><span>Entwicklerwerkzeuge ...</span></div>
<div style="left:1248px;top:1077px;width:200px;height:3px;background:#8fa8ba;"></div>
<svg style="left:1671px;top:1056px;" width="17" height="10" viewBox="0 0 17 10"><path d="M1 9l7.500-7.500L16 9" fill="none" stroke="#fff" stroke-width="1.400"/></svg>
<svg style="left:1699px;top:1053px;" width="21" height="14" viewBox="0 0 21 14"><rect x="4" y="3.500" width="15" height="9" fill="none" stroke="#fff" stroke-width="1.200"/><rect x="6" y="5.500" width="11" height="5" fill="#fff"/><path d="M19.500 6v4M2 0v4M0 4h4v3H0z" stroke="#fff" fill="none"/></svg>
<svg style="left:1729px;top:1052px;" width="21" height="17" viewBox="0 0 21 17"><rect x="4.500" y="1.500" width="15" height="11" fill="none" stroke="#fff" stroke-width="1.200"/><path d="M8 16h8M12 13v3M0 1h4v5H0z" stroke="#fff" stroke-width="1.200" fill="none"/></svg>
<svg style="left:1758px;top:1052px;" width="22" height="17" viewBox="0 0 22 17"><path d="M1 6h3l4-4v13l-4-4H1z" fill="none" stroke="#fff" stroke-width="1.200"/><path d="M11 6q1.500 2.500 0 5" fill="none" stroke="#fff"/><path d="M14 3.500q3.500 5 0 10M17.500 1.500q5 7 0 14" fill="none" stroke="#8a9298"/></svg>
<div class="t" style="left:1793px;top:1007px;font:400 15px 'Liberation Sans',sans-serif;color:#fff;letter-spacing:-0.612px;"><i class="s"></i><span>11:25:38</span></div>
<svg style="left:1869px;top:1051px;" width="21" height="20" viewBox="0 0 21 20"><path d="M.700 .700h19v13.500h-6.500l-3 3.500-3-3.500H.700z" fill="none" stroke="#fff" stroke-width="1.300"/></svg>
<div style="left:1914px;top:1042px;width:1px;height:38px;background:#6a7278;"></div>
</body></html>
